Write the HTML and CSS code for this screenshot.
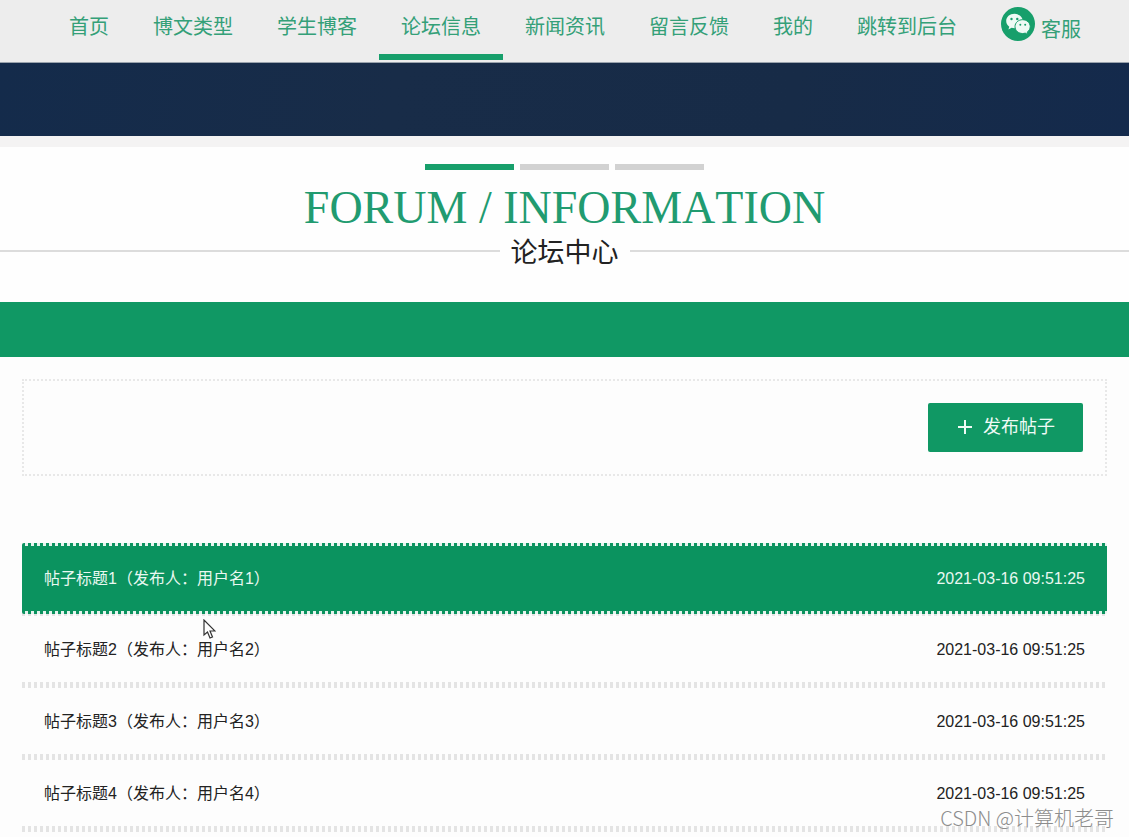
FILE: index.html
```html
<!DOCTYPE html>
<html lang="zh-CN">
<head>
<meta charset="utf-8">
<meta name="viewport" content="width=device-width, initial-scale=1">
<title>论坛中心</title>
<link rel="stylesheet" href="styles.css">
</head>
<body>
<header>
  <nav class="nav">
    <a href="#">首页</a>
    <a href="#">博文类型</a>
    <a href="#">学生博客</a>
    <a href="#" class="active">论坛信息</a>
    <a href="#">新闻资讯</a>
    <a href="#">留言反馈</a>
    <a href="#">我的</a>
    <a href="#">跳转到后台</a>
    <a href="#" class="service">
      <svg class="wechat" viewBox="0 0 34 34" aria-hidden="true">
        <circle cx="17" cy="17" r="17" fill="#179f6b"/>
        <path d="M13.500 6.800c-4.700 0-8.300 3.200-8.300 7.300 0 2.300 1.200 4.300 3.100 5.700l-.9 2.700 3.200-1.700c1 .3 1.900.4 2.900.4 4.700 0 8.300-3.100 8.300-7.100s-3.600-7.300-8.300-7.300z" fill="#eefaf4"/>
        <path d="M21.600 12.700c-4.200 0-7.600 3-7.600 6.900s3.400 6.900 7.600 6.900c.9 0 1.800-.1 2.600-.4l2.700 1.500-.7-2.500c1.900-1.300 3-3.300 3-5.500 0-3.900-3.400-6.900-7.600-6.900z" fill="#eefaf4" stroke="#179f6b" stroke-width="1"/>
        <g fill="#179f6b"><circle cx="10.500" cy="12" r="1.200"/><circle cx="16.300" cy="12" r="1.200"/><circle cx="19.300" cy="17.800" r="1"/><circle cx="24.200" cy="17.800" r="1"/></g>
      </svg>
      <span>客服</span>
    </a>
  </nav>
  <div class="banner"></div>
</header>
<main>
  <section class="heading">
    <div class="bars"><i class="on"></i><i></i><i></i></div>
    <h1>FORUM / INFORMATION</h1>
    <h2>论坛中心</h2>
  </section>
  <div class="band"></div>
  <div class="content">
    <div class="toolbar">
      <button type="button" class="post">
        <svg class="plus" viewBox="0 0 14 14" aria-hidden="true"><path d="M7 0v14M0 7h14" stroke="currentColor" stroke-width="2"/></svg>
        <span>发布帖子</span>
      </button>
    </div>
    <ul class="list">
      <li class="current"><a href="#"><span>帖子标题1（发布人：用户名1）</span><time>2021-03-16 09:51:25</time></a></li>
      <li><a href="#"><span>帖子标题2（发布人：用户名2）</span><time>2021-03-16 09:51:25</time></a></li>
      <li><a href="#"><span>帖子标题3（发布人：用户名3）</span><time>2021-03-16 09:51:25</time></a></li>
      <li><a href="#"><span>帖子标题4（发布人：用户名4）</span><time>2021-03-16 09:51:25</time></a></li>
    </ul>
  </div>
</main>
<svg class="pointer" viewBox="0 0 13 20" aria-hidden="true"><path d="M1 1v15l3.500-3 2.500 6 2.500-1-2.500-6h5z" fill="#fff" stroke="#333" stroke-width="1.200"/></svg>
<div class="watermark">CSDN @计算机老哥</div>
</body>
</html>
```
FILE: styles.css
```css
* { box-sizing: border-box; }

body {
  margin: 0;
  position: relative;
  background: #fdfdfd;
  color: #222;
  font-family: "Liberation Sans", "Noto Sans CJK SC", sans-serif;
}

a { color: inherit; text-decoration: none; }

.nav {
  display: flex;
  height: 63px;
  padding-left: 47px;
  background: #ededed;
  border-bottom: 1px solid #9aa3ad;
  color: #34a078;
  font-size: 20px;
  line-height: 54px;
  white-space: nowrap;
}

.nav a { height: 60px; padding: 0 22px; }
.nav .active { border-bottom: 6px solid #179f6b; }
.nav .service { display: flex; gap: 6px; line-height: 60px; }
.wechat { width: 34px; height: 34px; margin-top: 7px; }

.banner {
  height: 84px;
  background: linear-gradient(100deg, #142b4b, #182c48 35%, #172b47 70%, #142a4c);
  border-bottom: 11px solid #f4f3f3;
}

.heading { padding-top: 17px; background: #fefefe; }

.bars { display: flex; justify-content: center; gap: 6px; }
.bars i { width: 89px; height: 6px; background: #d2d2d2; }
.bars .on { background: #179f6b; }

h1 {
  margin: 12px 0 0;
  color: #219b70;
  font: 46px/52px "Liberation Serif", serif;
  font-kerning: none;
  text-align: center;
}

h2 {
  display: flex;
  align-items: center;
  gap: 11px;
  margin: 0;
  padding-bottom: 30px;
  font-size: 27px;
  font-weight: 400;
  line-height: 38px;
}

h2::before, h2::after {
  content: "";
  flex: 1;
  height: 2px;
  margin-bottom: 4px;
  background: #dcdcdc;
}

.band { height: 55px; background: #109864; }

.content { padding: 22px 22px 0; }

.toolbar {
  display: flex;
  justify-content: flex-end;
  padding: 22px;
  border: 2px dotted #e8e8e8;
}

.post {
  display: flex;
  align-items: center;
  justify-content: center;
  gap: 11px;
  width: 155px;
  height: 49px;
  padding: 0 0 2px 2px;
  border: 0;
  border-radius: 2px;
  background: #109864;
  color: #effaf5;
  font: 18px/26px "Liberation Sans", "Noto Sans CJK SC", sans-serif;
}

.plus { width: 14px; height: 14px; }

.list { margin: 67px 0 0; padding: 0; list-style: none; }

.list li {
  height: 72px;
  padding-bottom: 6px;
  background: repeating-linear-gradient(90deg, #e4e4e4 0 3px, transparent 3px 6px) bottom / 100% 6px no-repeat;
}

.list a {
  display: flex;
  align-items: center;
  justify-content: space-between;
  height: 66px;
  padding: 2px 22px 0;
  font-size: 16px;
  line-height: 24px;
}

.list .current { height: 73px; padding-bottom: 2px; }

.current a {
  height: 71px;
  padding-top: 0;
  border-radius: 2px;
  background:
    repeating-linear-gradient(90deg, transparent 0 3px, #e6f4ee 3px 6px) top / 100% 3px no-repeat,
    repeating-linear-gradient(90deg, transparent 0 3px, #e6f4ee 3px 6px) bottom / 100% 3px no-repeat,
    #0b935f;
  color: #e9f8f1;
}

.pointer { position: absolute; left: 203px; top: 619px; width: 13px; height: 20px; }

.watermark {
  position: absolute;
  right: 15px;
  top: 804px;
  color: #8d8d8d;
  font: 300 20px/28px "Noto Sans CJK SC", sans-serif;
}
```
